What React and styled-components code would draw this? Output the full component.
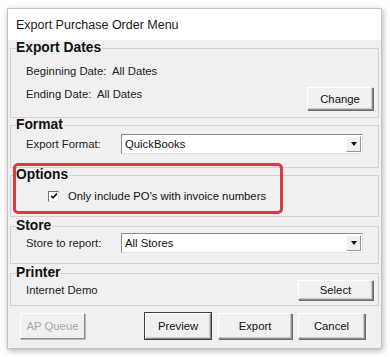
import React from 'react'
import styled, { createGlobalStyle } from 'styled-components'

const Global = createGlobalStyle`
  html, body {
    margin: 0;
    padding: 0;
    background: #ffffff;
  }
  body {
    font-family: 'Liberation Sans', Arial, sans-serif;
  }
`

const Page = styled.div`
  width: 390px;
  height: 357px;
  padding: 8px 8px 0 7px;
  box-sizing: border-box;
`

const Window = styled.div`
  width: 375px;
  height: 341px;
  box-sizing: border-box;
  border: 1px solid #c4c4c4;
  background: #f0f0f0;
  box-shadow: 1px 2px 6px rgba(0, 0, 0, 0.3);
  display: flex;
  flex-direction: column;
`

const TitleBar = styled.div`
  height: 31px;
  flex: none;
  background: #ffffff;
  display: flex;
  align-items: center;
  padding-left: 8px;
  font-size: 12.5px;
  color: #1a1a1a;
`

const Body = styled.div`
  flex: 1;
  padding: 1px 2px 0 2px;
  display: flex;
  flex-direction: column;
`

const Group = styled.fieldset`
  flex: none;
  margin: ${p => p.$top || 0}px 0 0 0;
  padding: 0 5px 0 15px;
  border: 1px solid #d2d2d2;
  height: ${p => p.$h}px;
  box-sizing: border-box;
  min-width: 0;
`

const Legend = styled.legend`
  font-weight: bold;
  font-size: 13.8px;
  color: #111;
  padding: 0 1px 0 0;
  margin-left: -10px;
  line-height: 14px;
`

const DatesLayout = styled.div`
  display: flex;
  justify-content: space-between;
  align-items: flex-start;
  margin-top: 9px;
`

const Lines = styled.div`
  display: flex;
  flex-direction: column;
  gap: 9px;
`

const Text = styled.div`
  font-size: 11.3px;
  color: #222;
  line-height: 14px;
  margin-top: ${p => p.$mt || 0}px;
`

const Row = styled.div`
  display: flex;
  align-items: center;
  margin-top: ${p => p.$mt || 0}px;
`

const Label = styled(Text)`
  width: 95px;
  flex: none;
`

const Select = styled.div`
  width: 242px;
  height: 20px;
  box-sizing: border-box;
  background: #fff;
  border: 1px solid;
  border-color: #8a8a8a #e2e2e2 #e2e2e2 #8a8a8a;
  display: flex;
  align-items: center;
  font-size: 11.3px;
  color: #111;
  padding-left: 3px;
  padding-right: 1px;
`

const SelectValue = styled.span`
  flex: 1;
`

const DropButton = styled.span`
  width: 15px;
  height: 16px;
  box-sizing: border-box;
  background: #f0f0f0;
  border: 1px solid;
  border-color: #fff #9a9a9a #9a9a9a #fff;
  display: flex;
  align-items: center;
  justify-content: center;
`

const Caret = styled.span`
  width: 0;
  height: 0;
  border-left: 3px solid transparent;
  border-right: 3px solid transparent;
  border-top: 4px solid #111;
`

const Button = styled.button`
  font-family: 'Liberation Sans', Arial, sans-serif;
  font-size: 11.3px;
  width: ${p => p.$w}px;
  height: ${p => p.$h || 26}px;
  margin: ${p => p.$mt || 0}px 0 0 ${p => p.$ml || 0}px;
  background: #f0f0f0;
  color: ${p => (p.disabled ? '#a8a8a8' : '#111')};
  border: 1px solid;
  border-color: #fff #8c8c8c #8c8c8c #fff;
  box-shadow: ${p =>
    p.$default
      ? '0 0 0 1px #3c3c3c, inset -1px -1px 0 #c8c8c8'
      : p.disabled
        ? '1px 1px 0 #b8b8b8'
        : '1px 1px 0 #6a6a6a, inset -1px -1px 0 #c8c8c8'};
  padding: 0;
  flex: none;
`

const OptionsWrap = styled.div`
  position: relative;
  flex: none;
`

const CheckRow = styled.label`
  display: flex;
  align-items: center;
  gap: 9px;
  margin: 7px 0 0 22px;
  font-size: 11.3px;
  line-height: 14px;
  color: #111;
`

const CheckBox = styled.span`
  width: 11px;
  height: 11px;
  box-sizing: border-box;
  background: #fff;
  border: 1px solid;
  border-color: #6e6e6e #e4e4e4 #e4e4e4 #6e6e6e;
  display: flex;
  align-items: center;
  justify-content: center;
`

const Highlight = styled.div`
  position: absolute;
  left: 3px;
  top: -5px;
  width: 270px;
  height: 51px;
  box-sizing: border-box;
  border: 3px solid #e0383f;
  border-radius: 5px;
  pointer-events: none;
`

const PrinterLayout = styled.div`
  display: flex;
  justify-content: space-between;
  align-items: flex-start;
`

const Footer = styled.div`
  display: flex;
  align-items: center;
  padding: 7px 0 0 10px;
`

export default function App() {
  return (
    <Page>
      <Global />
      <Window>
        <TitleBar>Export Purchase Order Menu</TitleBar>
        <Body>
          <Group $h={77}>
            <Legend>Export Dates</Legend>
            <DatesLayout>
              <Lines>
                <Text>Beginning Date:&nbsp; All Dates</Text>
                <Text>Ending Date:&nbsp; All Dates</Text>
              </Lines>
              <Button $w={66} $h={23} $mt={23}>
                Change
              </Button>
            </DatesLayout>
          </Group>

          <Group $h={50}>
            <Legend>Format</Legend>
            <Row $mt={2}>
              <Label>Export Format:</Label>
              <Select>
                <SelectValue>QuickBooks</SelectValue>
                <DropButton>
                  <Caret />
                </DropButton>
              </Select>
            </Row>
          </Group>

          <OptionsWrap>
            <Group $h={49}>
              <Legend>Options</Legend>
              <CheckRow>
                <CheckBox>
                  <svg width="8" height="8" viewBox="0 0 8 8">
                    <path d="M1 3.8 L3 5.8 L7 1.6" stroke="#111" strokeWidth="1.6" fill="none" />
                  </svg>
                </CheckBox>
                Only include PO's with invoice numbers
              </CheckRow>
            </Group>
            <Highlight />
          </OptionsWrap>

          <Group $h={45} $top={2}>
            <Legend>Store</Legend>
            <Row>
              <Label>Store to report:</Label>
              <Select>
                <SelectValue>All Stores</SelectValue>
                <DropButton>
                  <Caret />
                </DropButton>
              </Select>
            </Row>
          </Group>

          <Group $h={40} $top={2}>
            <Legend>Printer</Legend>
            <PrinterLayout>
              <Text $mt={3}>Internet Demo</Text>
              <Button $w={75} $h={20}>
                Select
              </Button>
            </PrinterLayout>
          </Group>

          <Footer>
            <Button $w={65} disabled>
              AP Queue
            </Button>
            <Button $w={66} $ml={60} $default>
              Preview
            </Button>
            <Button $w={74} $ml={7}>
              Export
            </Button>
            <Button $w={67} $ml={6}>
              Cancel
            </Button>
          </Footer>
        </Body>
      </Window>
    </Page>
  )
}
